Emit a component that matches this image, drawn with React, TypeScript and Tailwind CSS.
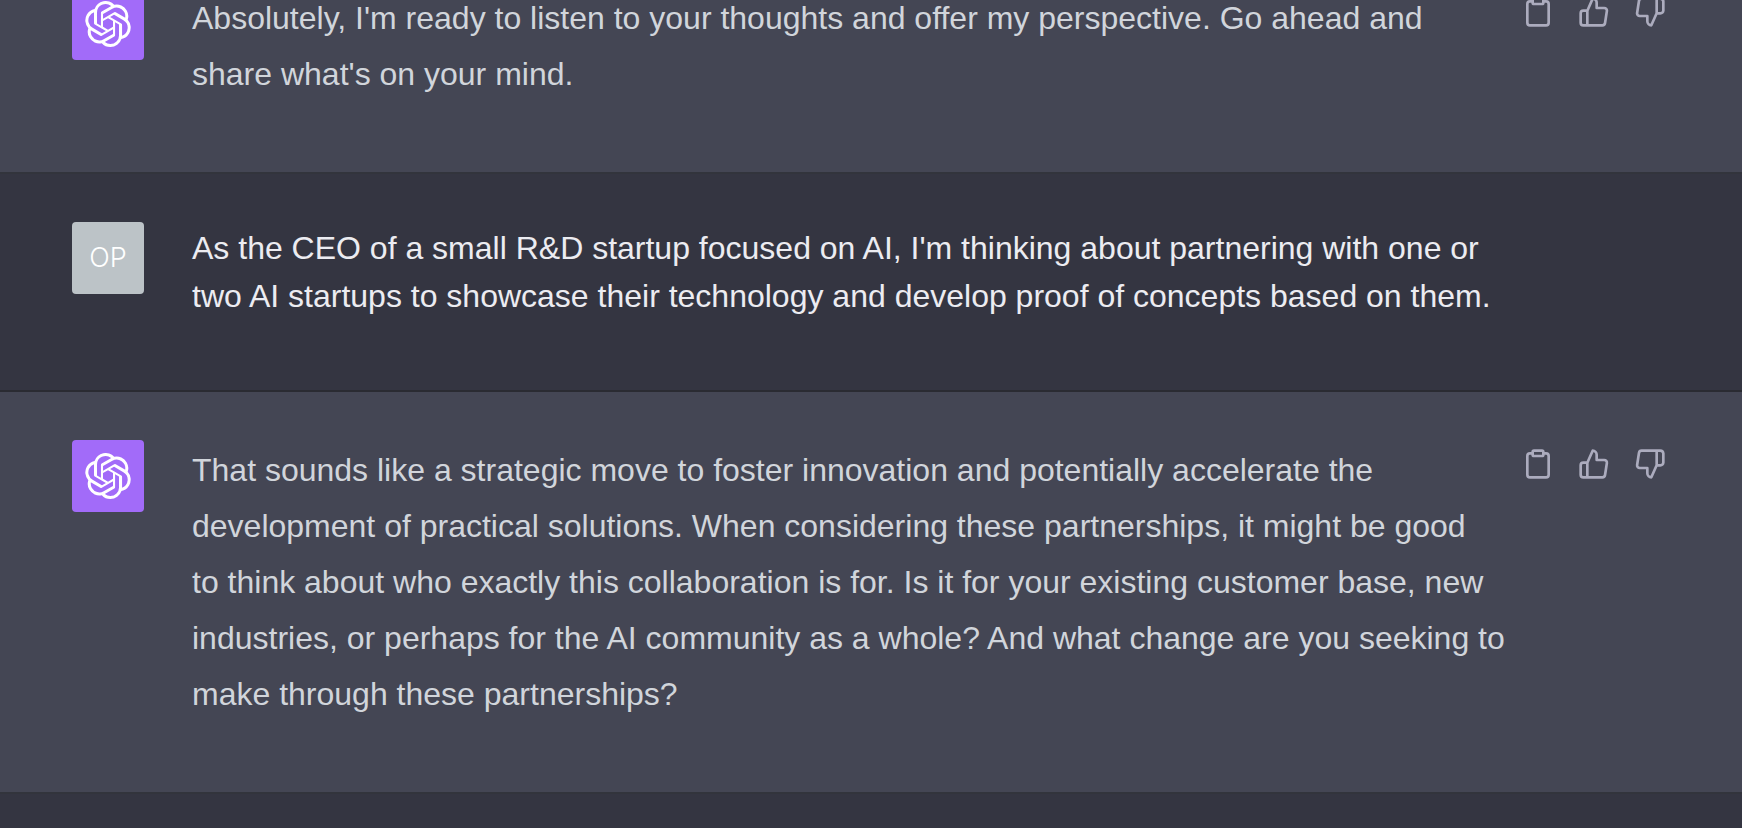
import type { ReactNode } from "react";
import { FiClipboard, FiThumbsDown, FiThumbsUp } from "react-icons/fi";
import { SiOpenai } from "react-icons/si";

const actions = [
  { label: "Copy", Icon: FiClipboard },
  { label: "Good response", Icon: FiThumbsUp },
  { label: "Bad response", Icon: FiThumbsDown },
];

function MessageActions() {
  return (
    <div className="flex shrink-0 gap-2">
      {actions.map(({ label, Icon }) => (
        <button
          key={label}
          type="button"
          aria-label={label}
          className="h-12 rounded-md p-2 text-[#acacbe] hover:bg-gray-700"
        >
          <Icon className="h-8 w-8" />
        </button>
      ))}
    </div>
  );
}

function AssistantMessage({ children, className = "" }: { children: ReactNode; className?: string }) {
  return (
    <section
      className={`flex border-b-2 border-[#202123]/50 bg-[#444654] pt-12 pr-17 pb-[70px] pl-18 ${className}`}
    >
      <div className="mr-12 flex size-18 shrink-0 items-center justify-center rounded-sm bg-[#a26bf9] text-white">
        <SiOpenai className="size-[46px]" />
      </div>
      <p className="min-w-0 flex-1 pt-0.5 text-[32px] leading-14 text-[#d1d5db]">{children}</p>
      <MessageActions />
    </section>
  );
}

function UserMessage({ initials, children }: { initials: string; children: ReactNode }) {
  return (
    <section className="flex border-b-2 border-[#202123]/50 bg-[#343541] pt-12 pr-17 pb-[70px] pl-18">
      <div className="mr-12 flex size-18 shrink-0 items-center justify-center rounded-sm bg-[#bcc3c7] font-['Inter',sans-serif] text-[27px] font-light text-white">
        {initials}
      </div>
      <p className="min-w-0 flex-1 pt-0.5 text-[32px] leading-12 text-[#ececf1]">{children}</p>
    </section>
  );
}

export default function App() {
  return (
    <main className="h-screen overflow-hidden bg-[#343541] font-['Liberation_Sans',sans-serif]">
      {/* The thread is scrolled partway into the first reply */}
      <AssistantMessage className="-mt-15">
        Absolutely, I'm ready to listen to your thoughts and offer my perspective. Go ahead and
        <br />
        share what's on your mind.
      </AssistantMessage>
      <UserMessage initials="OP">
        As the CEO of a small R&amp;D startup focused on AI, I'm thinking about partnering with one or
        <br />
        two AI startups to showcase their technology and develop proof of concepts based on them.
      </UserMessage>
      <AssistantMessage>
        That sounds like a strategic move to foster innovation and potentially accelerate the
        <br />
        development of practical solutions. When considering these partnerships, it might be good
        <br />
        to think about who exactly this collaboration is for. Is it for your existing customer base, new
        <br />
        industries, or perhaps for the AI community as a whole? And what change are you seeking to
        <br />
        make through these partnerships?
      </AssistantMessage>
    </main>
  );
}
